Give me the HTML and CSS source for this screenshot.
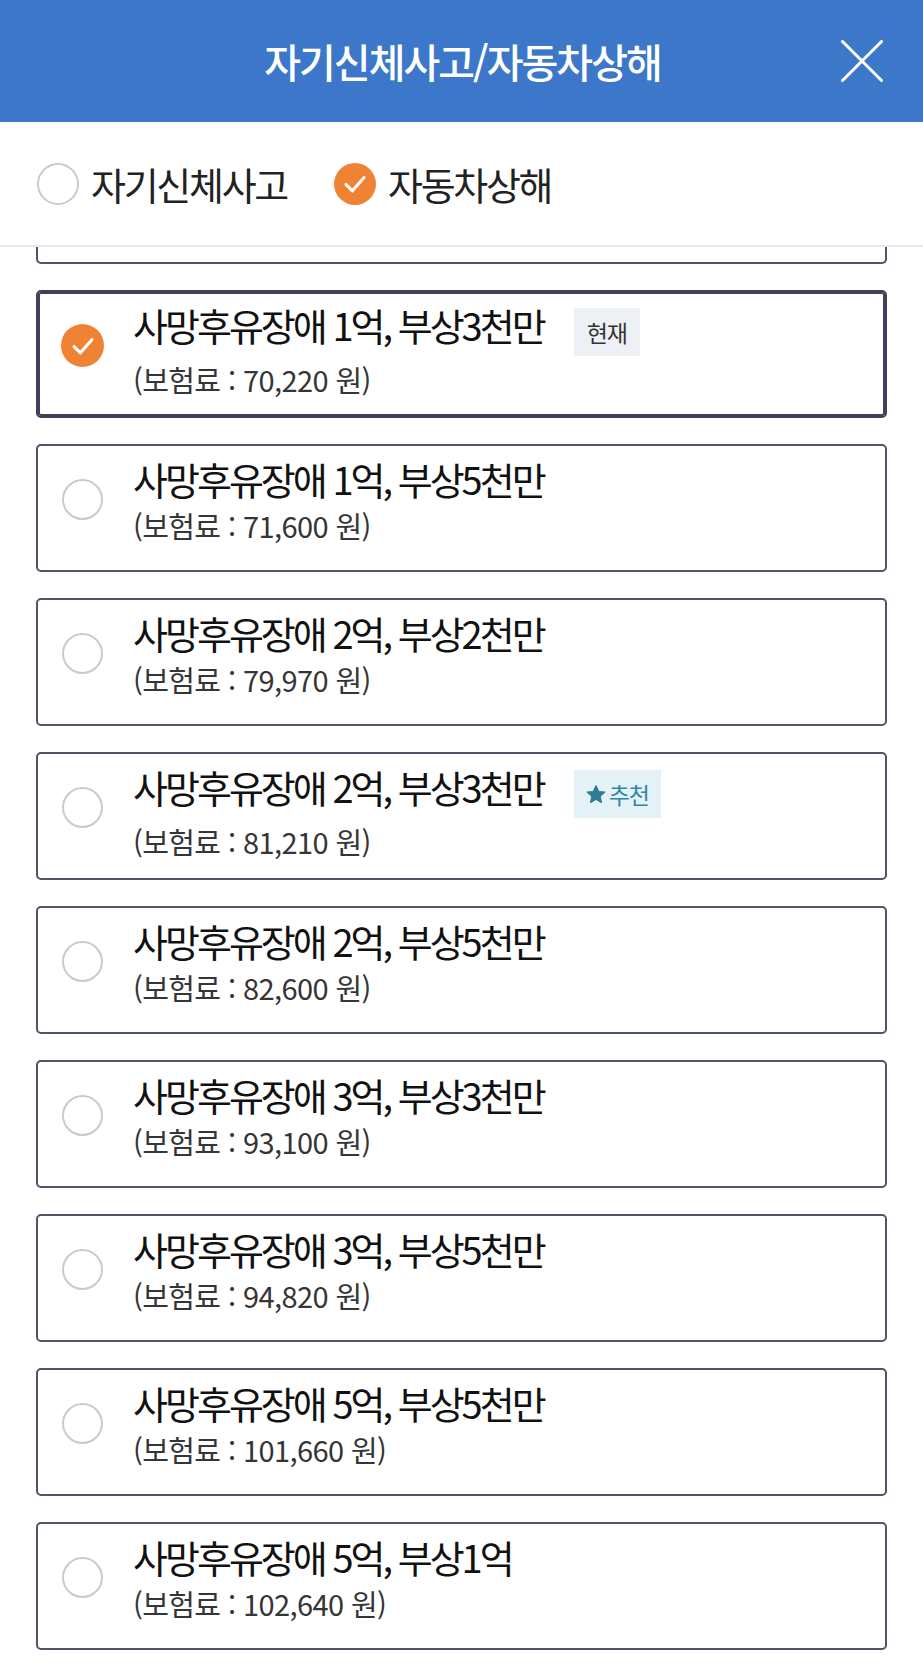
FILE: index.html
```html
<!DOCTYPE html>
<html lang="ko">
<head>
<meta charset="utf-8">
<title>자기신체사고/자동차상해</title>
<link rel="stylesheet" href="styles.css">
</head>
<body>
<div class="page">
  <header class="header">
    <span class="header-side"></span>
    <h1 class="header-title">자기신체사고/자동차상해</h1>
    <button class="close" type="button" aria-label="닫기">
      <svg viewBox="0 0 42 42" width="42" height="42"><path d="M1.5 1.5 L40.5 40.5 M40.5 1.5 L1.5 40.5" stroke="#ffffff" stroke-width="3" stroke-linecap="round" fill="none"/></svg>
    </button>
  </header>

  <div class="tabs">
    <div class="tab">
      <span class="radio"></span>
      <span class="tab-label">자기신체사고</span>
    </div>
    <div class="tab">
      <span class="radio checked"><svg viewBox="0 0 40 40" width="40" height="40"><path d="M11.5 20.5 L17.5 26.5 L28.5 14" stroke="#ffffff" stroke-width="3" stroke-linecap="round" stroke-linejoin="round" fill="none"/></svg></span>
      <span class="tab-label">자동차상해</span>
    </div>
  </div>

  <div class="list">
    <div class="card-tail"></div>

    <div class="card selected">
      <span class="radio checked"><svg viewBox="0 0 40 40" width="40" height="40"><path d="M11.5 20.5 L17.5 26.5 L28.5 14" stroke="#ffffff" stroke-width="3" stroke-linecap="round" stroke-linejoin="round" fill="none"/></svg></span>
      <div class="card-body">
        <div class="card-title-row"><span class="card-title">사망후유장애 1억, 부상3천만</span><span class="badge badge-current">현재</span></div>
        <div class="card-price">(보험료 : 70,220 원)</div>
      </div>
    </div>

    <div class="card">
      <span class="radio"></span>
      <div class="card-body">
        <div class="card-title-row"><span class="card-title">사망후유장애 1억, 부상5천만</span></div>
        <div class="card-price">(보험료 : 71,600 원)</div>
      </div>
    </div>

    <div class="card">
      <span class="radio"></span>
      <div class="card-body">
        <div class="card-title-row"><span class="card-title">사망후유장애 2억, 부상2천만</span></div>
        <div class="card-price">(보험료 : 79,970 원)</div>
      </div>
    </div>

    <div class="card">
      <span class="radio"></span>
      <div class="card-body">
        <div class="card-title-row"><span class="card-title">사망후유장애 2억, 부상3천만</span><span class="badge badge-recommend"><svg class="star" viewBox="0 0 24 23" width="20" height="19"><path d="M12 1 L15.1 8 L22.6 8.6 L16.9 13.6 L18.6 21.1 L12 17.1 L5.4 21.1 L7.1 13.6 L1.4 8.6 L8.9 8 Z" fill="#2b7d94" stroke="#2b7d94" stroke-width="1.5" stroke-linejoin="round"/></svg>추천</span></div>
        <div class="card-price">(보험료 : 81,210 원)</div>
      </div>
    </div>

    <div class="card">
      <span class="radio"></span>
      <div class="card-body">
        <div class="card-title-row"><span class="card-title">사망후유장애 2억, 부상5천만</span></div>
        <div class="card-price">(보험료 : 82,600 원)</div>
      </div>
    </div>

    <div class="card">
      <span class="radio"></span>
      <div class="card-body">
        <div class="card-title-row"><span class="card-title">사망후유장애 3억, 부상3천만</span></div>
        <div class="card-price">(보험료 : 93,100 원)</div>
      </div>
    </div>

    <div class="card">
      <span class="radio"></span>
      <div class="card-body">
        <div class="card-title-row"><span class="card-title">사망후유장애 3억, 부상5천만</span></div>
        <div class="card-price">(보험료 : 94,820 원)</div>
      </div>
    </div>

    <div class="card">
      <span class="radio"></span>
      <div class="card-body">
        <div class="card-title-row"><span class="card-title">사망후유장애 5억, 부상5천만</span></div>
        <div class="card-price">(보험료 : 101,660 원)</div>
      </div>
    </div>

    <div class="card">
      <span class="radio"></span>
      <div class="card-body">
        <div class="card-title-row"><span class="card-title">사망후유장애 5억, 부상1억</span></div>
        <div class="card-price">(보험료 : 102,640 원)</div>
      </div>
    </div>
  </div>
</div>
</body>
</html>
```

FILE: styles.css
```css
* {
  box-sizing: border-box;
}

html, body {
  margin: 0;
  padding: 0;
  background: #ffffff;
}

body {
  font-family: "Noto Sans CJK KR", "Noto Sans", sans-serif;
  color: #111111;
}

.page {
  width: 923px;
  min-height: 1673px;
  background: #ffffff;
}

/* Header */
.header {
  height: 122px;
  background: #3c77c9;
  display: grid;
  grid-template-columns: 1fr auto 1fr;
  align-items: center;
}

.header-title {
  margin: 0;
  font-size: 40px;
  font-weight: 500;
  line-height: 48px;
  letter-spacing: -2px;
  color: #ffffff;
  padding-left: 2px;
}

.close {
  justify-self: end;
  margin: 0 40px 0 0;
  padding: 0;
  border: 0;
  background: transparent;
  width: 42px;
  height: 42px;
  display: flex;
}

/* Tabs */
.tabs {
  height: 125px;
  border-bottom: 2px solid #e3e7ee;
  display: flex;
  align-items: center;
  padding-left: 37px;
  gap: 47px;
}

.tab {
  display: flex;
  align-items: center;
  gap: 12px;
}

.tab-label {
  font-size: 38px;
  line-height: 46px;
  letter-spacing: -2.3px;
  color: #222222;
}

.radio {
  flex: none;
  width: 42px;
  height: 42px;
  border-radius: 50%;
  border: 2px solid #c4cbd3;
  background: #ffffff;
  display: flex;
  align-items: center;
  justify-content: center;
}

.radio.checked {
  border: 0;
  background: #f08333;
}

.radio svg {
  width: 42px;
  height: 42px;
}

/* List */
.list {
  display: flex;
  flex-direction: column;
  gap: 26px;
  padding: 0 36px 0 36px;
}

.card-tail {
  height: 17px;
  border: 2px solid #50546a;
  border-top: 0;
  border-radius: 0 0 5px 5px;
}

.card {
  height: 128px;
  border: 2px solid #50546a;
  border-radius: 5px;
  display: flex;
  align-items: flex-start;
  padding: 10px 20px 0 24px;
}

.card.selected {
  border-color: #3e4157;
  box-shadow: inset 0 0 0 2px #3e4157;
}

.card .radio {
  width: 41px;
  height: 41px;
  margin-top: 23px;
}

.card .radio.checked {
  width: 43px;
  height: 43px;
  margin-top: 22px;
  margin-left: -1px;
  margin-right: -1px;
}

.card-body {
  margin-left: 30px;
  display: flex;
  flex-direction: column;
}

.card-title-row {
  display: flex;
  align-items: flex-start;
}

.card-title {
  font-size: 38px;
  line-height: 46px;
  letter-spacing: -3px;
  color: #111111;
  white-space: nowrap;
}

.card-price {
  margin-top: 5px;
  font-size: 29px;
  line-height: 36px;
  letter-spacing: -0.6px;
  color: #353535;
  white-space: nowrap;
}

.badge {
  margin-left: 30px;
  margin-top: 6px;
  height: 48px;
  padding: 0 13px;
  display: flex;
  align-items: center;
  font-size: 23px;
  letter-spacing: -1px;
}

.badge-current {
  background: #edf0f4;
  color: #333333;
}

.badge-recommend {
  background: #e4f1f6;
  color: #2e88a0;
  padding: 0 12px;
}

.star {
  margin-right: 3px;
  margin-top: 1px;
}
```
